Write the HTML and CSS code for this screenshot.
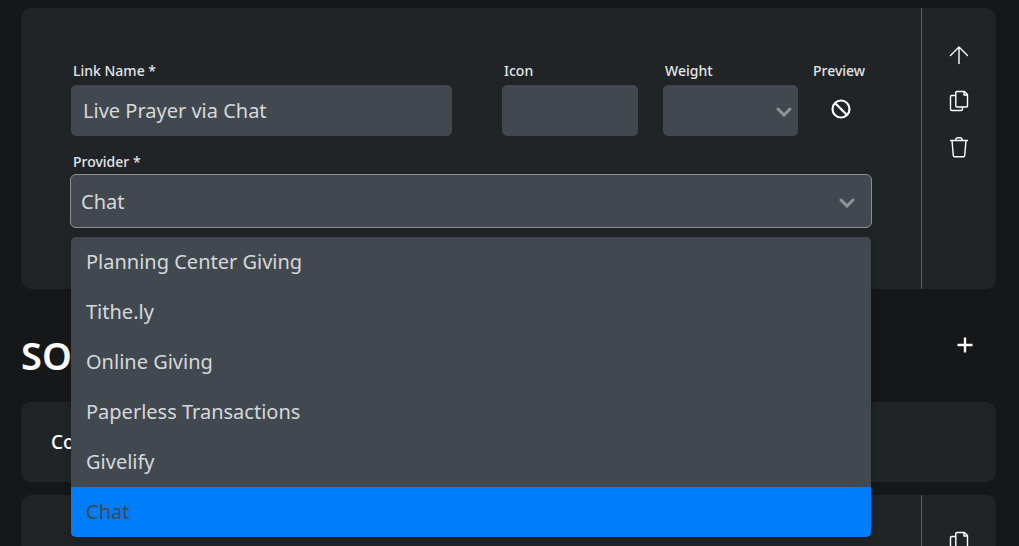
FILE: index.html
```html
<!DOCTYPE html>
<html lang="en">
<head>
<meta charset="utf-8">
<title>Links</title>
<link rel="stylesheet" href="styles.css">
</head>
<body>
<svg class="sprite" aria-hidden="true">
  <symbol id="copy" viewBox="0 0 20 22">
    <path d="M6.5 5.5H2.8Q1.5 5.5 1.5 6.8V19Q1.5 20.5 2.8 20.5H12Q13.5 20.5 13.5 19V17.2"/>
    <path d="M8 1.5H15.5L18.5 4.5V16Q18.5 17 17.3 17H8Q6.8 17 6.8 16V2.7Q6.8 1.5 8 1.5ZM15 1.5V5H18.5"/>
  </symbol>
</svg>
<main class="page">
  <section class="card">
    <form class="form">
      <div class="row">
        <div class="field">
          <label for="name">Link Name *</label>
          <input id="name" class="control" type="text" value="Live Prayer via Chat">
        </div>
        <div class="field icon-field">
          <label for="icon">Icon</label>
          <input id="icon" class="control" type="text">
        </div>
        <div class="pair">
          <div class="field weight-field">
            <label for="weight">Weight</label>
            <div class="select-wrap">
              <select id="weight" class="control"><option></option></select>
              <svg class="chevron" viewBox="0 0 16 10"><path d="M2 2L8 8L14 2"/></svg>
            </div>
          </div>
          <div class="field preview">
            <span class="label">Preview</span>
            <svg class="ban" viewBox="0 0 20 20" role="img" aria-label="None"><circle cx="10" cy="10" r="8.5"/><path d="M4 4L16 16"/></svg>
          </div>
        </div>
      </div>
      <div class="field provider">
        <label for="provider">Provider *</label>
        <div class="select-wrap">
          <select id="provider" class="control focused"><option>Chat</option></select>
          <svg class="chevron" viewBox="0 0 16 10"><path d="M2 2L8 8L14 2"/></svg>
          <ul class="menu" role="listbox" aria-label="Provider">
            <li role="option">Planning Center Giving</li>
            <li role="option">Tithe.ly</li>
            <li role="option">Online Giving</li>
            <li role="option">Paperless Transactions</li>
            <li role="option">Givelify</li>
            <li role="option" class="selected" aria-selected="true">Chat</li>
          </ul>
        </div>
      </div>
    </form>
    <div class="actions">
      <button type="button" aria-label="Move up"><svg viewBox="0 0 20 22"><path d="M10 19.5V3M1.5 11.5L10 3L18.5 11.5"/></svg></button>
      <button type="button" aria-label="Duplicate"><svg><use href="#copy"/></svg></button>
      <button type="button" aria-label="Delete"><svg viewBox="0 0 20 22"><path d="M1.5 4.5H18.5M6.5 4.2Q7 1.8 8.5 1.8H11.5Q13 1.8 13.5 4.2M3 4.5L4.3 19.5Q4.4 20.8 5.6 20.8H14.4Q15.6 20.8 15.7 19.5L17 4.5"/></svg></button>
    </div>
  </section>
  <header class="section-head">
    <h2>SO</h2>
    <button type="button" class="add" aria-label="Add"><svg viewBox="0 0 16 16"><path d="M8 0.5V15.5M0.5 8H15.5"/></svg></button>
  </header>
  <section class="card summary">Co</section>
  <section class="card next">
    <div class="actions">
      <button type="button" aria-label="Duplicate"><svg><use href="#copy"/></svg></button>
    </div>
  </section>
</main>
</body>
</html>
```
FILE: styles.css
```css
* { box-sizing: border-box; }
html { background: #161719; scrollbar-width: none; }
body {
  margin: 0;
  color: #fff;
  font-family: "Noto Sans", "Open Sans", sans-serif;
  font-size: 20px;
}
svg { display: block; fill: none; stroke: #fff; }
button { padding: 0; border: 0; background: none; }
.sprite { position: absolute; width: 0; height: 0; }
.page { padding: 8px 23px 0 21px; }
.card {
  display: flex;
  background: #202427;
  border-radius: 10px;
}
.form { flex: 1; min-width: 0; padding: 53px 50px 61px 50px; }
.row { display: flex; }
.field { flex: 1; min-width: 0; }
.icon-field { flex: 0 0 136px; margin: 0 25px 0 50px; }
.pair { display: flex; gap: 15px; }
.weight-field { flex: 0 0 135px; }
.preview { flex: 0 0 58px; }
label, .label {
  display: block;
  margin-bottom: 4px;
  padding-left: 2px;
  color: #e4e5e6;
  font-size: 14px;
  font-weight: 500;
  line-height: 20px;
}
.label { padding-left: 0; }
.control {
  display: block;
  width: 100%;
  height: 51px;
  padding: 0 11px;
  border: 1px solid #42484f;
  border-radius: 5px;
  outline: 0;
  background: #42484f;
  color: #d5d9db;
  font: inherit;
  appearance: none;
}
.select-wrap { position: relative; }
.chevron {
  position: absolute;
  top: 22px;
  right: 6px;
  width: 16px;
  height: 10px;
  stroke: #929394;
  stroke-width: 3;
  stroke-linecap: round;
  pointer-events: none;
}
.ban { width: 20px; height: 20px; margin: 18px auto 0 18px; stroke-width: 2.2; }
.provider { margin-top: 16px; }
.provider label { margin-bottom: 2px; }
.provider .select-wrap { margin: 0 -1px; }
.provider .chevron { top: 24px; right: 17px; }
.focused { height: 54px; padding: 0 10px; border-color: #8f8f8f; border-radius: 6px; }
.menu {
  position: absolute;
  top: 63px;
  right: 1px;
  left: 1px;
  z-index: 2;
  margin: 0;
  padding: 0;
  overflow: hidden;
  border-radius: 5px;
  background: #42484f;
  box-shadow: 0 2px 8px rgb(0 0 0 / 20%);
  color: #d5d9db;
  list-style: none;
}
.menu li { padding: 0 15px; line-height: 50px; }
.menu .selected { background: #007dfa; color: #42484f; }
.actions {
  display: flex;
  flex: 0 0 75px;
  flex-direction: column;
  align-items: center;
  gap: 24px;
  margin-left: auto;
  padding-top: 36px;
  border-left: 1px solid #5a5d60;
}
.actions svg { width: 20px; height: 22px; stroke-width: 1.4; stroke-linecap: round; stroke-linejoin: round; }
.section-head {
  display: flex;
  align-items: flex-start;
  justify-content: space-between;
  padding: 39px 23px 20px 0;
}
h2 { margin: 0; font-size: 38px; font-weight: 600; line-height: 54px; }
.add { margin-top: 9px; }
.add svg { width: 16px; height: 16px; stroke-width: 2.4; }
.summary { padding: 0 30px; font-size: 19px; font-weight: 500; line-height: 80px; }
.next { margin-top: 13px; }
```
